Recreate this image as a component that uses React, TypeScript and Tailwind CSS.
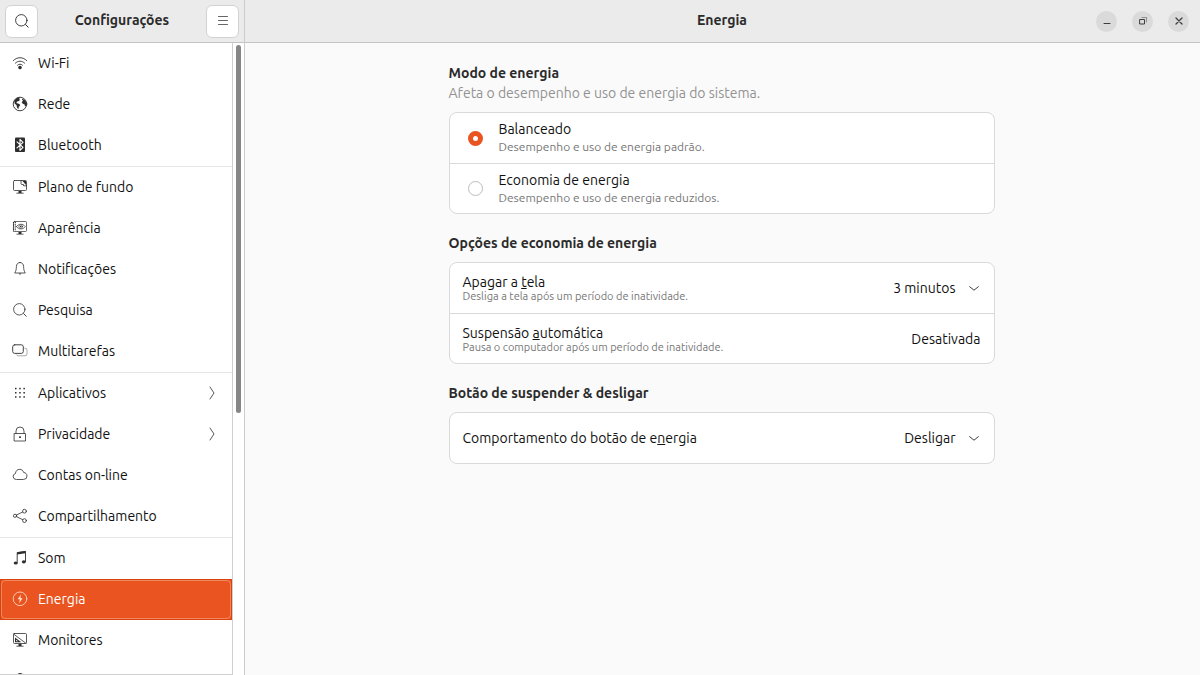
import { useState, type ReactNode } from "react";
import clsx from "clsx";

interface IconProps {
  children: ReactNode;
  className?: string;
}

function Icon({ children, className = "size-4" }: IconProps) {
  return (
    <svg
      viewBox="0 0 16 16"
      fill="none"
      stroke="currentColor"
      strokeLinecap="round"
      strokeLinejoin="round"
      className={clsx("shrink-0", className)}
      aria-hidden="true"
    >
      {children}
    </svg>
  );
}

const screen = (
  <>
    <path d="M2.5 1.5h11a1 1 0 0 1 1 1v8a1 1 0 0 1-1 1h-11a1 1 0 0 1-1-1v-8a1 1 0 0 1 1-1z" />
    <path d="M6.5 12h3v2h-3z" fill="currentColor" stroke="none" />
    <path d="M4.8 14.2h6.4" />
  </>
);

const icons = {
  wifi: (
    <>
      <path d="M1.3 5.6C5 1.7 11 1.7 14.7 5.6" strokeWidth="0.9" />
      <path d="M3.4 8.1c2.5-2.6 6.7-2.6 9.2 0" strokeWidth="0.9" />
      <path d="M5.5 10.2c1.4-1.4 3.6-1.4 5 0" strokeWidth="0.9" />
      <circle cx="8" cy="12.6" r="1.8" fill="currentColor" stroke="none" />
    </>
  ),
  globe: (
    <>
      <circle cx="8" cy="8" r="6.8" strokeWidth="0.9" />
      <path
        d="M2.2 4.6 5 2l3-.7-.8 1.6L8 4 6.4 5.2 5 5.6l-.6 1.3 1.4.6 1.6.4.8 1.3-1.3 1.6-.6 2.4L5 11.5 4.6 9.2 2.6 7.6zM10 2.6l3 1.6 1.7 2.8-.5 2.6-1.2 1.2-.4-2.4-1.8-.6-1.1-1.6 1.4-1.6-1-.7z"
        fill="currentColor"
        stroke="none"
      />
    </>
  ),
  bluetooth: (
    <>
      <rect x="3" y="0.5" width="10" height="14.5" rx="1" fill="currentColor" stroke="none" />
      <path d="m5 4.8 6 5.6-3 3V2.4l3 3-6 5.4" stroke="white" strokeWidth="1.1" />
    </>
  ),
  background: (
    <>
      <g strokeWidth="0.8">{screen}</g>
      <path d="M9 1.5v3a1 1 0 0 0 1 1h1.5v1.3h3" strokeWidth="0.8" />
      <path d="M10.5 2H14v4z" fill="currentColor" stroke="none" />
    </>
  ),
  appearance: (
    <>
      <g strokeWidth="0.7">{screen}</g>
      <path d="M1.5 2v9.5M3.3 2v9" strokeDasharray="1.2 1" strokeLinecap="butt" strokeWidth="1.1" />
      <path d="M4.4 6.6c2.2-3.2 6.6-3.2 8.8 0-2.2 3.2-6.6 3.2-8.8 0z" strokeWidth="0.7" />
      <circle cx="8.7" cy="6.6" r="1.8" strokeWidth="0.6" />
      <circle cx="8.7" cy="6.6" r="0.8" fill="currentColor" stroke="none" />
    </>
  ),
  bell: (
    <>
      <path
        d="M8 1.5c-2.2 0-3.6 1.7-3.6 4 0 3.2-.7 4.9-1.7 6.5h10.6c-1-1.6-1.7-3.3-1.7-6.5 0-2.3-1.4-4-3.6-4z"
        strokeWidth="0.8"
      />
      <path d="M6.6 12.6a1.5 1.5 0 0 0 2.8 0z" fill="currentColor" stroke="none" />
    </>
  ),
  search: (
    <>
      <circle cx="7.3" cy="7.3" r="5.7" strokeWidth="0.8" />
      <path d="m11.6 11.6 2.6 2.6" strokeWidth="0.9" />
    </>
  ),
  multitask: (
    <>
      <rect x="0.7" y="1.8" width="10.6" height="8.6" rx="2" strokeWidth="0.9" />
      <path
        d="M12.8 5.2h.2a2 2 0 0 1 2 2v3.6a2 2 0 0 1-2 2H6.2a2 2 0 0 1-1.8-1"
        strokeWidth="0.8"
        opacity="0.5"
      />
    </>
  ),
  apps: (
    <g fill="currentColor" stroke="none">
      {[3, 7.2, 11.4].map((y) =>
        [3, 7.2, 11.4].map((x) => (
          <rect key={`${x}-${y}`} x={x} y={y - 0.2} width="1.5" height="1.5" />
        ))
      )}
    </g>
  ),
  lock: (
    <>
      <rect x="2.5" y="7.5" width="11" height="7.5" strokeWidth="0.8" />
      <path d="M4 7.5V5a4 4 0 0 1 8 0v2.5" strokeWidth="0.8" />
      <rect x="7.2" y="10.3" width="1.7" height="1.7" fill="currentColor" stroke="none" />
    </>
  ),
  cloud: (
    <path
      d="M4 12.5a3 3 0 0 1-.6-5.9C3.6 4 5.4 2.3 7.6 2.3c2 0 3.5 1.2 4.1 3.2 2 .1 3.3 1.6 3.3 3.5a3.4 3.4 0 0 1-3.4 3.5z"
      strokeWidth="0.8"
    />
  ),
  share: (
    <g strokeWidth="0.8">
      <circle cx="3" cy="7.8" r="1.6" />
      <circle cx="12.5" cy="3.2" r="1.9" />
      <circle cx="12.5" cy="12.6" r="1.9" />
      <path d="m4.5 7 6.2-3M4.5 8.6l6.2 3.1" />
    </g>
  ),
  sound: (
    <>
      <path d="M5.2 12.8V2.6l8.3-1.2v10.2" strokeWidth="0.9" />
      <path d="M5.2 2.2l8.3-1.2v2.2L5.2 4.4z" fill="currentColor" stroke="none" />
      <ellipse cx="3.7" cy="13" rx="2" ry="1.6" fill="currentColor" stroke="none" />
      <ellipse cx="11.8" cy="11.8" rx="2" ry="1.6" fill="currentColor" stroke="none" />
    </>
  ),
  power: (
    <>
      <circle cx="8" cy="7.8" r="6.8" strokeWidth="0.8" />
      <path d="M9 3.4 5.6 8.2h2.2L7.2 12.2l3.4-4.9H8.3z" fill="currentColor" stroke="none" />
    </>
  ),
  displays: (
    <>
      <g strokeWidth="0.8">{screen}</g>
      <path d="M1.5 2 14 11.3" strokeWidth="0.8" />
      <path
        d="M3 5.5v4.7h6.3zm1.1 2.2 2 1.6h-2z"
        fill="currentColor"
        stroke="none"
        fillRule="evenodd"
      />
    </>
  ),
  mouse: (
    <>
      <rect x="3.5" y="0.5" width="9" height="14.5" rx="4.5" />
      <path d="M8 3v3" />
    </>
  ),
};

interface NavItem {
  id: string;
  label?: string;
  icon: keyof typeof icons;
  more?: boolean;
}

const groups: NavItem[][] = [
  [
    { id: "wifi", label: "Wi-Fi", icon: "wifi" },
    { id: "network", label: "Rede", icon: "globe" },
    { id: "bluetooth", label: "Bluetooth", icon: "bluetooth" },
  ],
  [
    { id: "background", label: "Plano de fundo", icon: "background" },
    { id: "appearance", label: "Aparência", icon: "appearance" },
    { id: "notifications", label: "Notificações", icon: "bell" },
    { id: "search", label: "Pesquisa", icon: "search" },
    { id: "multitasking", label: "Multitarefas", icon: "multitask" },
  ],
  [
    { id: "apps", label: "Aplicativos", icon: "apps", more: true },
    { id: "privacy", label: "Privacidade", icon: "lock", more: true },
    { id: "accounts", label: "Contas on-line", icon: "cloud" },
    { id: "sharing", label: "Compartilhamento", icon: "share" },
  ],
  [
    { id: "sound", label: "Som", icon: "sound" },
    { id: "power", label: "Energia", icon: "power" },
    { id: "displays", label: "Monitores", icon: "displays" },
    { id: "mouse", icon: "mouse" },
  ],
];

const modes = [
  { id: "balanced", title: "Balanceado", detail: "Desempenho e uso de energia padrão." },
  { id: "saver", title: "Economia de energia", detail: "Desempenho e uso de energia reduzidos." },
];

function Sidebar() {
  const [active, setActive] = useState("power");

  return (
    <nav className="min-w-0 flex-1 overflow-hidden border-r border-b border-[#cfcfcf] bg-white">
      {groups.map((group, i) => (
        <ul key={i} className="border-b border-[#e6e6e6]">
          {group.map((item) => (
            <li key={item.id}>
              <button
                type="button"
                aria-label={item.label ?? item.id}
                onClick={() => setActive(item.id)}
                className={clsx(
                  "flex h-[41px] w-full items-center border text-left",
                  active === item.id
                    ? "border-[#d9420f] bg-[#e95420] text-white"
                    : "border-transparent text-[#111]"
                )}
              >
                <span
                  className={clsx(
                    "flex h-full flex-1 items-center gap-2.5 rounded border pr-2.5 pb-0.5 pl-2.5",
                    active === item.id ? "border-[#f08a5e]" : "border-transparent"
                  )}
                >
                  <Icon
                    className={clsx("size-4", active === item.id ? "text-[#ffe3d6]" : "text-[#2e2e2e]")}
                  >
                    {icons[item.icon]}
                  </Icon>
                  <span className="flex-1">{item.label}</span>
                  {item.more && (
                    <Icon className="size-4 text-[#444]">
                      <path d="m6 2 4 6-4 6" strokeWidth="0.9" />
                    </Icon>
                  )}
                </span>
              </button>
            </li>
          ))}
        </ul>
      ))}
    </nav>
  );
}

function Card({ children }: { children: ReactNode }) {
  return (
    <div className="rounded-lg border border-[#d9d9d9] bg-white [&>*+*]:border-t [&>*+*]:border-[#d9d9d9]">
      {children}
    </div>
  );
}

interface DropdownProps {
  id: string;
  options: string[];
}

function Dropdown({ id, options }: DropdownProps) {
  const [value, setValue] = useState(options[0]);

  return (
    <div className="relative flex items-center">
      <select
        id={id}
        value={value}
        onChange={(e) => setValue(e.target.value)}
        className="field-sizing-content appearance-none bg-transparent pr-[25px] outline-none"
      >
        {options.map((option) => (
          <option key={option}>{option}</option>
        ))}
      </select>
      <span className="pointer-events-none absolute right-0">
        <Icon className="size-3.5 text-[#222]">
          <path d="m3 6.5 5 4 5-4" />
        </Icon>
      </span>
    </div>
  );
}

function WindowButton({ label, children }: { label: string; children: ReactNode }) {
  return (
    <button
      type="button"
      aria-label={label}
      className="flex size-[21px] items-center justify-center rounded-full bg-[#dadada] text-[#3d3d3d]"
    >
      <Icon>{children}</Icon>
    </button>
  );
}

export default function App() {
  const [mode, setMode] = useState("balanced");

  return (
    <div className="flex h-screen overflow-hidden bg-[#fafafa] font-['Ubuntu','Noto_Sans',sans-serif] text-sm leading-[18px] text-[#111]">
      <aside className="flex w-[245px] shrink-0 flex-col border-r border-[#cccccc]">
        <header className="flex h-[43px] shrink-0 items-center border-b border-[#c4c4c4] bg-[#ebebeb] px-[5px]">
          <button
            type="button"
            aria-label="Pesquisar"
            className="flex size-[33px] items-center justify-center rounded-md border border-[#d2d2d2] bg-white"
          >
            <Icon>{icons.search}</Icon>
          </button>
          <h1 className="flex-1 pb-0.5 text-center font-bold text-[#2b2b2b]">Configurações</h1>
          <button
            type="button"
            aria-label="Menu"
            className="flex size-[33px] items-center justify-center rounded-md border border-[#d2d2d2] bg-white text-[#555]"
          >
            <Icon>
              <path d="M3.5 3.5h9M3.5 7.5h9M3.5 11.5h9" strokeWidth="0.9" />
            </Icon>
          </button>
        </header>
        <div className="flex min-h-0 flex-1">
          <Sidebar />
          <div className="w-[11px] bg-white pt-0.5 pl-[3px]">
            <div className="h-7/12 w-[5px] rounded-full bg-[#868686]" />
          </div>
        </div>
      </aside>

      <main className="flex min-w-0 flex-1 flex-col">
        <header className="grid h-[43px] shrink-0 grid-cols-[1fr_auto_1fr] items-center border-b border-[#c4c4c4] bg-[#ebebeb] pr-[11px] pl-2.5">
          <h2 className="col-start-2 pb-0.5 font-bold text-[#2b2b2b]">Energia</h2>
          <div className="flex justify-end gap-[15px]">
            <WindowButton label="Minimizar">
              <path d="M5 10.5h6" />
            </WindowButton>
            <WindowButton label="Restaurar">
              <path d="M5 6.5h4.5V11H5z" />
              <path d="M7 4.5h4.5V9" strokeWidth="0.8" opacity="0.6" />
            </WindowButton>
            <WindowButton label="Fechar">
              <path d="m5 5 6 6M11 5l-6 6" strokeWidth="1.3" />
            </WindowButton>
          </div>
        </header>

        <div className="flex justify-center pt-[21px] pr-0.5">
          <div className="flex w-full max-w-[546px] flex-col gap-5">
            <section>
              <h3 className="font-bold text-[#2b2b2b]">Modo de energia</h3>
              <p className="mt-0.5 mb-2.5 text-[#929292]">
                Afeta o desempenho e uso de energia do sistema.
              </p>
              <Card>
                {modes.map((m) => (
                  <label key={m.id} htmlFor={m.id} className="flex h-[50px] items-center gap-4 pl-[18px]">
                    <input
                      type="radio"
                      id={m.id}
                      name="mode"
                      checked={mode === m.id}
                      onChange={() => setMode(m.id)}
                      className="size-[15px] appearance-none rounded-full border border-[#bdbdbd] bg-white checked:border-[5px] checked:border-[#e95420]"
                    />
                    <span className="flex flex-col">
                      <span>{m.title}</span>
                      <span className="text-xs leading-[18px] text-[#777]">{m.detail}</span>
                    </span>
                  </label>
                ))}
              </Card>
            </section>

            <section>
              <h3 className="mb-2.5 font-bold text-[#2b2b2b]">Opções de economia de energia</h3>
              <Card>
                <div className="flex h-[50px] items-center justify-between px-[13px]">
                  <label htmlFor="blank" className="flex flex-col">
                    <span className="leading-4">
                      Apagar a <u>t</u>ela
                    </span>
                    <span className="text-[11px] leading-3 text-[#777]">
                      Desliga a tela após um período de inatividade.
                    </span>
                  </label>
                  <Dropdown id="blank" options={["3 minutos"]} />
                </div>
                <button
                  type="button"
                  className="flex h-[50px] w-full items-center justify-between px-[13px] text-left"
                >
                  <span className="flex flex-col">
                    <span className="leading-4">
                      Suspensão <u>a</u>utomática
                    </span>
                    <span className="text-[11px] leading-3 text-[#777]">
                      Pausa o computador após um período de inatividade.
                    </span>
                  </span>
                  <span>Desativada</span>
                </button>
              </Card>
            </section>

            <section>
              <h3 className="mb-2.5 font-bold text-[#2b2b2b]">Botão de suspender &amp; desligar</h3>
              <Card>
                <div className="flex h-[50px] items-center justify-between px-[13px]">
                  <label htmlFor="power-button">
                    Comportamento do botão de e<u>n</u>ergia
                  </label>
                  <Dropdown id="power-button" options={["Desligar"]} />
                </div>
              </Card>
            </section>
          </div>
        </div>
      </main>
    </div>
  );
}
